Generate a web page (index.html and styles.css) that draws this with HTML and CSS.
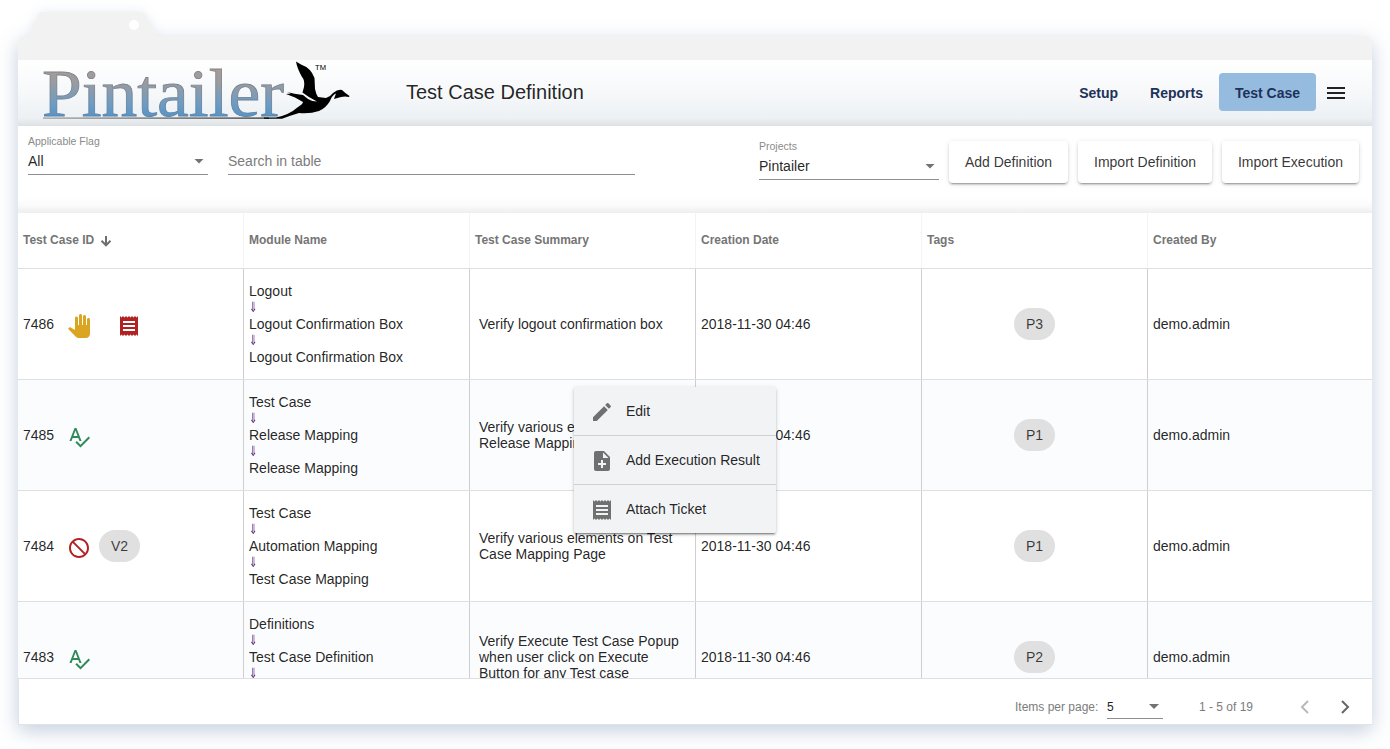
FILE: index.html
```
<!DOCTYPE html>
<html lang="en">
<head>
<meta charset="utf-8">
<title>Test Case Definition</title>
<link rel="stylesheet" href="styles.css">
</head>
<body>
<svg class="defs" width="0" height="0">
  <symbol id="receipt" viewBox="0 0 24 24"><path d="M18 17H6v-2h12v2zm0-4H6v-2h12v2zm0-4H6V7h12v2zM3 22l1.5-1.5L6 22l1.5-1.5L9 22l1.5-1.5L12 22l1.500-1.500L15 22l1.500-1.500L18 22l1.500-1.500L21 22V2l-1.500 1.500L18 2l-1.500 1.500L15 2l-1.500 1.500L12 2l-1.500 1.500L9 2 7.500 3.500 6 2 4.500 3.500 3 2v20z"/></symbol>
  <symbol id="spell" viewBox="0 0 24 24"><path d="M12.450 16h2.090L9.430 3H7.570L2.460 16h2.090l1.120-3h5.640l1.140 3zm-6.020-5L8.500 5.480 10.570 11H6.430zm15.160.590l-8.090 8.090L9.830 16l-1.410 1.410 5.090 5.090L23 13l-1.410-1.410z"/></symbol>
  <symbol id="hand" viewBox="0 0 24 24"><path d="M23 5.500V20c0 2.200-1.800 4-4 4h-7.300c-1.080 0-2.100-.430-2.850-1.190L1 14.830s1.260-1.230 1.300-1.250c.220-.190.490-.290.790-.290.220 0 .420.060.600.160.040.010 4.310 2.460 4.310 2.460V4c0-.830.670-1.500 1.500-1.500S11 3.170 11 4v7h1V1.500c0-.830.670-1.500 1.500-1.500S15 .670 15 1.500V11h1V2.500c0-.830.670-1.500 1.500-1.500s1.500.670 1.500 1.500V11h1V5.500c0-.830.670-1.500 1.500-1.500s1.500.670 1.500 1.500z"/></symbol>
  <symbol id="block" viewBox="0 0 24 24"><path d="M12 2C6.480 2 2 6.480 2 12s4.480 10 10 10 10-4.480 10-10S17.520 2 12 2zM4 12c0-4.420 3.580-8 8-8 1.850 0 3.550.630 4.900 1.690L5.690 16.900C4.630 15.550 4 13.850 4 12zm8 8c-1.850 0-3.550-.630-4.900-1.690L18.310 7.100C19.370 8.450 20 10.150 20 12c0 4.420-3.580 8-8 8z" transform="matrix(-1 0 0 1 24 0)"/></symbol>
</svg>

<div class="window">
  <div class="window-tab"><svg width="130" height="24" viewBox="0 0 130 24"><path d="M0 24 11 2Q12 0 14 0H112Q115 0 117 2L129 24Z" fill="#f2f2f2"/><circle cx="106" cy="13" r="5" fill="#fff"/></svg></div>
  <div class="window-bar"></div>

  <header class="header">
    <svg class="logo" width="314" height="66" viewBox="0 0 314 66" role="img" aria-label="Pintailer">
      <defs>
        <linearGradient id="ink" gradientUnits="userSpaceOnUse" x1="0" y1="8" x2="0" y2="56"><stop offset="0" stop-color="#a69d9a"/><stop offset=".3" stop-color="#9b9ba0"/><stop offset=".75" stop-color="#6e9cc2"/><stop offset="1" stop-color="#5a94c4"/></linearGradient>
        <linearGradient id="edge" gradientUnits="userSpaceOnUse" x1="0" y1="8" x2="0" y2="56"><stop offset="0" stop-color="#8b8482"/><stop offset="1" stop-color="#5b85ab"/></linearGradient>
        <linearGradient id="rule" x1="0" x2="1" y1="0" y2="0"><stop offset="0" stop-color="#999"/><stop offset="1" stop-color="#222"/></linearGradient>
      </defs>
      <text class="logo-word" x="6" y="56" textLength="242" lengthAdjust="spacingAndGlyphs">Pintailer</text>
      <rect x="7" y="57.500" width="226" height="1.200" fill="url(#rule)"/>
      <path d="M260 1.500 265 4.500Q275 8 278.500 18L279 29Q280 34 282 37L290 38Q295 36 297 33Q302 29 306 30Q309 33 313.500 36L313 37Q309 36 305 37L298 39Q299 36 300 33.500Q296 35 294 41Q290 48 283 51Q274 54 263 53Q253 56 246 58.700H228V57.500H240Q253 55 262 47Q267 44 267 42L259 37.500 250 34 255 33.500 251 32Q258 34 267 35L272 39Q276 41.500 281 41.500Q272 37 266.500 32.500L268 27Q269 20 266 17Q261 8 260 1.500Z"/>
      <text class="logo-tm" x="279" y="9.500" textLength="11" lengthAdjust="spacingAndGlyphs">TM</text>
    </svg>
    <h1 class="title">Test Case Definition</h1>
    <nav class="nav">
      <a class="nav-link">Setup</a>
      <a class="nav-link">Reports</a>
      <a class="nav-link nav-link-active">Test Case</a>
      <svg class="burger" width="18" height="12"><path d="M0 0h18v2H0zM0 5h18v2H0zM0 10h18v2H0z"/></svg>
    </nav>
  </header>

  <section class="toolbar">
    <div class="field select flag">
      <label>Applicable Flag</label>
      <div class="value">All<i class="caret"></i></div>
    </div>
    <div class="field search"><div class="value placeholder">Search in table</div></div>
    <div class="field select projects">
      <label>Projects</label>
      <div class="value">Pintailer<i class="caret"></i></div>
    </div>
    <button class="btn btn-add">Add Definition</button>
    <button class="btn btn-def">Import Definition</button>
    <button class="btn btn-exec">Import Execution</button>
  </section>

  <div class="row head">
    <div class="cell">Test Case ID <svg class="sort" width="12" height="12" viewBox="0 0 12 12"><path d="M6 1v9M1.500 5.800 6 10.300l4.500-4.500"/></svg></div>
    <div class="cell">Module Name</div>
    <div class="cell">Test Case Summary</div>
    <div class="cell">Creation Date</div>
    <div class="cell">Tags</div>
    <div class="cell">Created By</div>
  </div>

  <div class="body">
    <div class="row">
      <div class="cell id"><span class="num">7486</span><svg class="icon hand"><use href="#hand"/></svg><svg class="icon ticket"><use href="#receipt"/></svg></div>
      <div class="cell path"><span>Logout</span><i class="arrow">⇓</i><span>Logout Confirmation Box</span><i class="arrow">⇓</i><span>Logout Confirmation Box</span></div>
      <div class="cell summary">Verify logout confirmation box</div>
      <div class="cell">2018-11-30 04:46</div>
      <div class="cell tags"><span class="chip">P3</span></div>
      <div class="cell">demo.admin</div>
    </div>
    <div class="row alt">
      <div class="cell id"><span class="num">7485</span><svg class="icon spell"><use href="#spell"/></svg></div>
      <div class="cell path"><span>Test Case</span><i class="arrow">⇓</i><span>Release Mapping</span><i class="arrow">⇓</i><span>Release Mapping</span></div>
      <div class="cell summary">Verify various elements on<br>Release Mapping Page</div>
      <div class="cell">2018-11-30 04:46</div>
      <div class="cell tags"><span class="chip">P1</span></div>
      <div class="cell">demo.admin</div>
    </div>
    <div class="row">
      <div class="cell id"><span class="num">7484</span><svg class="icon block"><use href="#block"/></svg><span class="chip version">V2</span></div>
      <div class="cell path"><span>Test Case</span><i class="arrow">⇓</i><span>Automation Mapping</span><i class="arrow">⇓</i><span>Test Case Mapping</span></div>
      <div class="cell summary">Verify various elements on Test<br>Case Mapping Page</div>
      <div class="cell">2018-11-30 04:46</div>
      <div class="cell tags"><span class="chip">P1</span></div>
      <div class="cell">demo.admin</div>
    </div>
    <div class="row alt">
      <div class="cell id"><span class="num">7483</span><svg class="icon spell"><use href="#spell"/></svg></div>
      <div class="cell path"><span>Definitions</span><i class="arrow">⇓</i><span>Test Case Definition</span><i class="arrow">⇓</i><span>&nbsp;</span></div>
      <div class="cell summary">Verify Execute Test Case Popup<br>when user click on Execute<br>Button for any Test case</div>
      <div class="cell">2018-11-30 04:46</div>
      <div class="cell tags"><span class="chip">P2</span></div>
      <div class="cell">demo.admin</div>
    </div>
  </div>

  <footer class="pager">
    <span class="per-page">Items per page:</span>
    <div class="size">5<i class="caret"></i></div>
    <span class="range">1 - 5 of 19</span>
    <svg class="prev" width="10" height="14" viewBox="0 0 10 14"><path d="M8 1 2 7l6 6"/></svg>
    <svg class="next" width="10" height="14" viewBox="0 0 10 14"><path d="M2 1l6 6-6 6"/></svg>
  </footer>
</div>

<div class="menu">
  <div class="menu-item"><svg class="menu-icon"><path d="M3 17.250V21h3.750L17.810 9.940l-3.750-3.750L3 17.250zM20.710 7.040c.390-.390.390-1.020 0-1.410l-2.340-2.340c-.390-.390-1.020-.390-1.410 0l-1.830 1.830 3.750 3.750 1.830-1.830z"/></svg><span>Edit</span></div>
  <div class="menu-item"><svg class="menu-icon"><path d="M14 2H6c-1.100 0-1.990.900-1.990 2L4 20c0 1.100.890 2 1.990 2H18c1.100 0 2-.900 2-2V8l-6-6zm2 14h-3v3h-2v-3H8v-2h3v-3h2v3h3v2zm-3-7V3.500L18.500 9H13z"/></svg><span>Add Execution Result</span></div>
  <div class="menu-item"><svg class="menu-icon"><use href="#receipt" width="24" height="24"/></svg><span>Attach Ticket</span></div>
</div>
</body>
</html>
```
FILE: styles.css
```
* { box-sizing: border-box; }
body {
  margin: 0;
  width: 1390px;
  height: 749px;
  overflow: hidden;
  position: relative;
  background: #fff;
  color: rgba(0, 0, 0, .87);
  font: 14px/16px "Liberation Sans", Arial, sans-serif;
}
.defs { position: absolute; }
.window {
  width: 1354px;
  height: 689px;
  margin: 36px 0 0 18px;
  position: relative;
  display: flex;
  flex-direction: column;
  border-radius: 6px 6px 0 0;
  background: #fff;
  box-shadow: 0 6px 20px rgba(100, 130, 165, .38);
}
.window-tab {
  position: absolute;
  left: 10px;
  top: -24px;
  height: 24px;
  filter: drop-shadow(0 0 6px rgba(100, 130, 175, .16));
}
.window-tab svg { display: block; }
.window-bar {
  height: 24px;
  flex: none;
  position: relative;
  border-radius: 6px 6px 0 0;
  background: #f2f2f2;
}
.header {
  height: 66px;
  flex: none;
  display: flex;
  align-items: center;
  padding: 0 27px 0 18px;
  background: linear-gradient(#fff 0%, #f5f7f9 55%, #edf1f4 88%, #dde1e4 100%);
}
.logo { flex: none; margin-right: 56px; }
.logo-word {
  font: 67px "Liberation Serif", serif;
  fill: url(#ink);
  stroke: url(#edge);
  stroke-width: .8px;
}
.logo-tm { font: 7.500px "Liberation Sans", sans-serif; }
.title { margin: -2px 0 0; font-size: 20px; font-weight: 400; line-height: 24px; }
.nav {
  margin-left: auto;
  display: flex;
  align-items: center;
  color: #1e315b;
  font-weight: 700;
}
.nav-link { height: 38px; margin-top: -2px; line-height: 40px; padding: 0 16px; }
.nav-link-active { background: #95bcde; border-radius: 4px; width: 97px; text-align: center; padding: 0; }
.burger { margin-left: 11px; fill: #222; }
.toolbar {
  height: 87px;
  flex: none;
  display: flex;
  align-items: flex-start;
  padding: 0 13px 0 10px;
  background: linear-gradient(#fff 82%, #fafafa 92%, #eee 100%);
}
.field { border-bottom: 1px solid #8e8e92; }
.field label { display: block; font-size: 10.500px; line-height: 12px; color: #8a8a8a; white-space: nowrap; }
.value { display: flex; justify-content: space-between; align-items: center; }
.placeholder { color: #7c7c7c; }
.caret {
  width: 10px;
  height: 5px;
  margin-right: 4px;
  background: #737373;
  clip-path: polygon(0 0, 100% 0, 50% 100%);
}
.flag { width: 180px; height: 49px; padding-top: 9px; }
.flag .value, .projects .value { margin-top: 6px; }
.search { width: 407px; height: 49px; margin-left: 20px; padding-top: 27px; }
.projects { width: 180px; height: 54px; margin-left: auto; padding-top: 14px; }
.btn {
  height: 42px;
  margin: 15px 0 0 10px;
  padding: 0;
  border: 0;
  border-radius: 4px;
  background: #fff;
  color: rgba(0, 0, 0, .8);
  font: 14px "Liberation Sans", Arial, sans-serif;
  box-shadow: 0 3px 1px -2px rgba(0, 0, 0, .2), 0 2px 2px rgba(0, 0, 0, .14), 0 1px 5px rgba(0, 0, 0, .12);
}
.btn-add { width: 119px; }
.btn-def { width: 134px; }
.btn-exec { width: 137px; }
.row {
  height: 111px;
  display: grid;
  grid-template-columns: repeat(5, 226px) 224px;
  border-bottom: 1px solid #dedfe1;
}
.head { height: 56px; flex: none; color: #757575; font-size: 12px; font-weight: 700; }
.alt { background: #fbfcfe; }
.cell {
  display: flex;
  align-items: center;
  padding: 0 5px;
  border-right: 1px solid #cfcfd1;
  white-space: nowrap;
}
.cell:last-child { border-right: 0; }
.head .cell { border-color: #f4f4f4; padding-bottom: 1px; }
.sort { margin-left: 6px; margin-top: 1px; fill: none; stroke: #6f6f6f; stroke-width: 2px; }
.body { flex: none; height: 410px; overflow: hidden; border-bottom: 1px solid #dedfe1; }
.id .num { width: 31px; flex: none; }
.icon { width: 24px; height: 24px; flex: none; margin: 3px 0 0 13px; }
.hand { fill: #daa520; }
.ticket { margin-left: 26px; fill: #b22222; }
.spell { fill: #2e8b57; }
.block { fill: #b22222; }
.chip {
  width: 41px;
  height: 32px;
  border-radius: 16px;
  background: #e0e0e0;
  color: rgba(0, 0, 0, .75);
  text-align: center;
  line-height: 32px;
}
.version { margin-left: 8px; }
.tags { justify-content: center; }
.path { flex-direction: column; align-items: flex-start; justify-content: center; }
.path span { line-height: 17px; }
.arrow { height: 16px; font: 14px/14px "DejaVu Sans", sans-serif; color: #5c2f7c; transform: scaleX(.75); transform-origin: 0 0; }
.summary { padding-left: 9px; }
.pager {
  flex: 1;
  display: flex;
  align-items: center;
  padding-left: 996px;
  border: solid #e0e4ea;
  border-width: 0 0 1px 1px;
  font-size: 12px;
  color: #7c7c7c;
}
.pager > * { flex: none; margin-top: 11px; }
.per-page { width: 92px; }
.size {
  width: 56px;
  height: 24px;
  display: flex;
  justify-content: space-between;
  align-items: center;
  border-bottom: 1px solid #8e8e92;
  color: #222;
}
.range { width: 64px; margin-left: 36px; }
.prev, .next { fill: none; stroke: #b9b9b9; stroke-width: 2px; }
.prev { margin-left: 37px; }
.next { margin-left: 30px; stroke: #666; }
.menu {
  position: absolute;
  left: 574px;
  top: 387px;
  width: 202px;
  border-radius: 2px;
  background: #f1f3f5;
  box-shadow: 0 3px 1px -2px rgba(0, 0, 0, .25), 0 2px 2px rgba(0, 0, 0, .18), 0 1px 5px rgba(0, 0, 0, .14);
}
.menu-item {
  height: 49px;
  display: flex;
  align-items: center;
  padding-left: 16px;
  border-bottom: 1px solid #cfd1d4;
  white-space: nowrap;
}
.menu-item:last-child { height: 48px; border-bottom: 0; }
.menu-icon { width: 24px; height: 24px; margin: 2px 12px 0 0; fill: #707070; }
```
